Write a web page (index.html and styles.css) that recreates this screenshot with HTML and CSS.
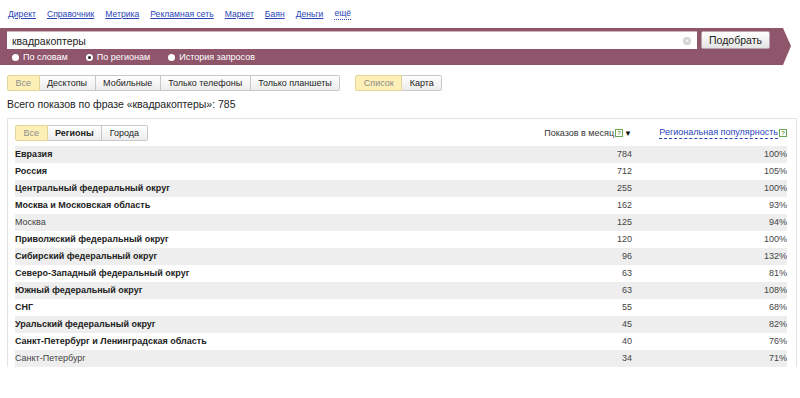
FILE: index.html
```html
<!DOCTYPE html>
<html lang="ru">
<head>
  <meta charset="UTF-8" />
  <title>Подбор слов</title>
  <link rel="stylesheet" href="styles.css">
</head>
<body>
  <div class="services">
    <a href="#">Директ</a>
    <a href="#">Справочник</a>
    <a href="#">Метрика</a>
    <a href="#">Рекламная сеть</a>
    <a href="#">Маркет</a>
    <a href="#">Баян</a>
    <a href="#">Деньги</a>
    <a href="#" class="more">ещё</a>
  </div>

  <div class="search-bar">
    <div class="search-row">
      <div class="search-input">
        <span class="query">квадракоптеры</span>
        <span class="clear">&times;</span>
      </div>
      <button class="btn-go">Подобрать</button>
    </div>
    <div class="modes">
      <label class="mode"><span class="radio"></span>По словам</label>
      <label class="mode"><span class="radio checked"></span>По регионам</label>
      <label class="mode"><span class="radio"></span>История запросов</label>
    </div>
  </div>

  <div class="filters">
    <div class="tabs">
      <span class="tab active">Все</span>
      <span class="tab">Десктопы</span>
      <span class="tab">Мобильные</span>
      <span class="tab">Только телефоны</span>
      <span class="tab">Только планшеты</span>
    </div>
    <div class="tabs">
      <span class="tab active">Список</span>
      <span class="tab">Карта</span>
    </div>
  </div>

  <div class="total">Всего показов по фразе «квадракоптеры»: 785</div>

  <div class="panel">
    <div class="panel-head">
      <div class="tabs">
        <span class="tab active">Все</span>
        <span class="tab bold">Регионы</span>
        <span class="tab">Города</span>
      </div>
      <div class="col-num">Показов в месяц<span class="hint">?</span><span class="sort">&#9660;</span></div>
      <div class="col-pop"><a href="#">Региональная популярность</a><span class="hint">?</span></div>
    </div>
    <div class="rows" id="rows"></div>
  </div>

  <script>
    const regions = [
      ["Евразия", 784, "100%", true],
      ["Россия", 712, "105%", true],
      ["Центральный федеральный округ", 255, "100%", true],
      ["Москва и Московская область", 162, "93%", true],
      ["Москва", 125, "94%", false],
      ["Приволжский федеральный округ", 120, "100%", true],
      ["Сибирский федеральный округ", 96, "132%", true],
      ["Северо-Западный федеральный округ", 63, "81%", true],
      ["Южный федеральный округ", 63, "108%", true],
      ["СНГ", 55, "68%", true],
      ["Уральский федеральный округ", 45, "82%", true],
      ["Санкт-Петербург и Ленинградская область", 40, "76%", true],
      ["Санкт-Петербург", 34, "71%", false]
    ];

    const rows = document.getElementById('rows');
    regions.forEach(([name, shows, pop, bold]) => {
      const row = document.createElement('div');
      row.className = 'row';
      row.innerHTML = `<span class="name${bold ? ' bold' : ''}">${name}</span>` +
        `<span class="num">${shows}</span><span class="pop">${pop}</span>`;
      rows.appendChild(row);
    });
  </script>
</body>
</html>
```

FILE: styles.css
```css
body {
  margin: 0;
  font-family: 'Liberation Sans', Arial, sans-serif;
  font-size: 9px;
  color: #222;
  background: #fff;
}

a {
  color: #2a45b8;
}

.services {
  display: flex;
  gap: 11px;
  padding: 8px 0 0 8px;
  height: 13px;
  line-height: 13px;
  font-size: 8.6px;
}

.services .more {
  text-decoration: none;
  border-bottom: 1px dotted #2a45b8;
  line-height: 11px;
  align-self: flex-start;
}

.search-bar {
  margin-top: 7px;
  width: 791px;
  height: 37px;
  background: #8f566b;
  clip-path: polygon(0 0, 783px 0, 791px 18px, 783px 37px, 0 37px);
}

.search-row {
  display: flex;
  align-items: center;
  gap: 4px;
  padding: 3px 0 0 7px;
}

.search-input {
  width: 690px;
  height: 18px;
  background: #fff;
  border-top: 1px solid #c9b5bd;
  box-sizing: border-box;
  display: flex;
  align-items: center;
  justify-content: space-between;
  padding: 0 6px 0 5px;
}

.query {
  font-size: 10.5px;
}

.clear {
  width: 8px;
  height: 8px;
  border-radius: 50%;
  background: #d2d2d2;
  color: #fff;
  font-size: 8px;
  line-height: 8px;
  text-align: center;
}

.btn-go {
  height: 18px;
  width: 69px;
  padding: 0;
  font-family: inherit;
  font-size: 10.5px;
  color: #222;
  border: 1px solid #b8a5ac;
  border-radius: 2px;
  background: linear-gradient(#fff, #e4e4e4);
}

.modes {
  display: flex;
  gap: 18px;
  padding: 2px 0 0 12px;
  color: #fff;
  line-height: 13px;
}

.mode {
  display: flex;
  align-items: center;
  gap: 4px;
}

.radio {
  width: 7px;
  height: 7px;
  border-radius: 50%;
  background: #fff;
  box-sizing: border-box;
}

.radio.checked {
  border: 2px solid #fff;
  background: #222;
}

.filters {
  display: flex;
  gap: 15px;
  padding: 10px 0 0 7px;
}

.tabs {
  display: flex;
}

.tab {
  height: 16px;
  line-height: 15px;
  padding: 0 7.5px;
  box-sizing: border-box;
  border: 1px solid #c8c8c8;
  border-left: none;
  background: linear-gradient(#fff, #ececec);
  color: #222;
}

.tab:first-child {
  border-left: 1px solid #c8c8c8;
  border-radius: 2px 0 0 2px;
}

.tab:last-child {
  border-radius: 0 2px 2px 0;
}

.tab.active {
  background: #fdf0b6;
  border-color: #e2d49a;
  color: #8c8c8c;
}

.tab.bold {
  font-weight: bold;
}

.total {
  padding: 6px 0 0 7px;
  font-size: 10.5px;
  line-height: 14px;
}

.panel {
  margin: 7px 3px 0 7px;
  border: 1px solid #e3e3e3;
  border-bottom: none;
  padding: 6px 9px 0 7px;
}

.panel-head {
  display: flex;
  align-items: center;
  height: 16px;
  margin-bottom: 5px;
}

.panel-head .tabs {
  flex: 1;
}

.col-num {
  display: flex;
  align-items: center;
  color: #333;
  width: 200px;
  justify-content: flex-end;
}

.col-pop {
  display: flex;
  align-items: center;
  justify-content: flex-end;
  width: 155px;
  white-space: nowrap;
}

.col-pop a {
  text-decoration: none;
  border-bottom: 1px dashed #2a45b8;
  line-height: 11px;
}

.hint {
  display: inline-block;
  width: 6px;
  height: 6px;
  margin-left: 1px;
  border: 1px solid #6aa84f;
  color: #6aa84f;
  font-size: 6px;
  line-height: 6px;
  text-align: center;
  font-weight: bold;
}

.sort {
  font-size: 8px;
  margin-left: 1px;
  color: #111;
}

.row {
  display: flex;
  height: 17px;
  line-height: 17px;
  color: #444;
}

.row:nth-child(odd) {
  background: #eeeeee;
}

.name {
  flex: 1;
}

.name.bold {
  font-weight: bold;
  color: #222;
}

.num {
  width: 150px;
  text-align: right;
}

.pop {
  width: 155px;
  text-align: right;
}
```
